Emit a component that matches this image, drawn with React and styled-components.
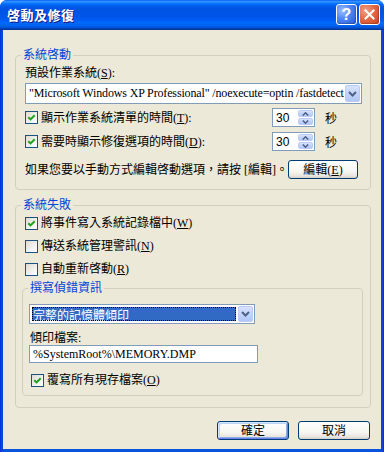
import React from 'react';
import styled, { createGlobalStyle } from 'styled-components';

const Global = createGlobalStyle`
  html, body { margin: 0; padding: 0; background: #ffffff; }
  body { font-family: "Liberation Serif", "Noto Sans CJK TC", serif; font-size: 12px; color: #000; }
  * { box-sizing: border-box; }
`;

const Window = styled.div`
  width: 384px;
  height: 452px;
  display: flex;
  flex-direction: column;
  background: linear-gradient(90deg, #0831D9 0%, #0855DD 1%, #0855DD 99%, #0831D9 100%);
  border-radius: 7px 7px 0 0;
  overflow: hidden;
`;

const TitleBar = styled.div`
  height: 30px;
  flex-shrink: 0;
  display: flex;
  align-items: center;
  padding: 0 4px 1px 7px;
  background: linear-gradient(180deg, #0058EE 0%, #3593FF 4%, #288EFF 7%, #127DFF 10%, #036FFC 13%,
    #0262EE 18%, #0057E5 25%, #0054E3 30%, #0055EB 56%, #005BF5 66%, #026AFE 76%,
    #0062EF 86%, #0052D6 92%, #0040AB 96%, #003092 100%);
`;

const Title = styled.div`
  flex: 1;
  color: #ffffff;
  font-family: "Noto Sans CJK TC", sans-serif;
  font-weight: bold;
  font-size: 13px;
  line-height: 16px;
  letter-spacing: 0.5px;
  text-shadow: 1px 1px 0 #0A1883;
`;

const CaptionButton = styled.div`
  width: 21px;
  height: 21px;
  margin-left: 2px;
  border: 1px solid #ffffff;
  border-radius: 3px;
  display: flex;
  align-items: center;
  justify-content: center;
  color: #ffffff;
  font-family: "Liberation Sans", sans-serif;
  font-weight: bold;
  font-size: 16px;
  background: ${p => p.$close
    ? 'radial-gradient(circle at 30% 30%, #F0A088 0%, #E36A45 45%, #C8431E 100%)'
    : 'radial-gradient(circle at 30% 30%, #9DBDFB 0%, #4F85F0 45%, #2158D8 100%)'};
  box-shadow: inset -1px -1px 1px rgba(0, 0, 0, 0.2);
`;

const Body = styled.div`
  flex: 1;
  margin: 0 3px 3px 3px;
  background: #ECE9D8;
  padding: 18px 10px 0 12px;
  display: flex;
  flex-direction: column;
`;

const Group = styled.fieldset`
  margin: ${p => p.$mt || 0}px 0 0 0;
  padding: 0;
  min-width: 0;
  border: 1px solid #D0D0BF;
  border-radius: 4px;
`;

const Legend = styled.legend`
  color: #0046D5;
  margin-left: 5px;
  padding: 0 2px;
  line-height: 14px;
  font-size: 12px;
`;

const Content = styled.div`
  padding: ${p => p.$pad};
  display: flex;
  flex-direction: column;
`;

const Text = styled.div`
  line-height: 14px;
  margin-top: ${p => p.$mt || 0}px;
  margin-left: ${p => p.$ml || 0}px;
  white-space: nowrap;
`;

const U = styled.span`
  text-decoration: underline;
`;

const Combo = styled.div`
  height: ${p => p.$h}px;
  width: ${p => (p.$w ? `${p.$w}px` : 'auto')};
  margin-top: ${p => p.$mt || 0}px;
  border: 1px solid #7F9DB9;
  background: #ffffff;
  display: flex;
  align-items: stretch;
  padding: 1px;
`;

const ComboText = styled.div`
  flex: 1;
  display: flex;
  align-items: center;
  padding-left: 2px;
  white-space: nowrap;
  overflow: hidden;
  letter-spacing: -0.15px;
`;

const Selected = styled.div`
  flex: 1;
  display: flex;
  align-items: center;
  margin: 1px 2px 1px 1px;
  padding-left: 1px;
  background: #316AC5;
  color: #ffffff;
  outline: 1px dotted #000;
  outline-offset: -1px;
  font-family: "Noto Sans CJK TC", sans-serif;
`;

const ArrowButton = styled.div`
  width: 15px;
  border-radius: 2px;
  border: 1px solid #BBCBF3;
  background: linear-gradient(180deg, #D7E3FC 0%, #C3D4FC 50%, #B2C7F6 100%);
  display: flex;
  align-items: center;
  justify-content: center;
`;

const SpinRow = styled.div`
  display: grid;
  grid-template-columns: 1fr 43px 47px;
  align-items: center;
  height: 19px;
  margin-top: ${p => p.$mt}px;
`;

const CheckLabel = styled.div`
  display: flex;
  align-items: center;
  gap: 3px;
  line-height: 14px;
  white-space: nowrap;
  height: ${p => p.$h || 19}px;
  margin-top: ${p => p.$mt || 0}px;
  margin-left: ${p => p.$ml || 0}px;
`;

const Box = styled.span`
  width: 13px;
  height: 13px;
  flex-shrink: 0;
  border: 1px solid #1C5180;
  background: linear-gradient(135deg, #DCDCD7 0%, #F2F2EE 60%, #FFFFFF 100%);
  display: flex;
  align-items: center;
  justify-content: center;
`;

const Spinner = styled.div`
  height: 19px;
  border: 1px solid #7F9DB9;
  background: #ffffff;
  display: flex;
  padding: 1px;
`;

const SpinValue = styled.div`
  flex: 1;
  display: flex;
  align-items: center;
  padding-left: 2px;
  font-family: "Liberation Sans", sans-serif;
`;

const SpinButtons = styled.div`
  width: 15px;
  display: flex;
  flex-direction: column;
  gap: 1px;
`;

const SpinHalf = styled.div`
  flex: 1;
  border-radius: 2px;
  border: 1px solid #BBCBF3;
  background: linear-gradient(180deg, #D7E3FC 0%, #C3D4FC 50%, #B2C7F6 100%);
  display: flex;
  align-items: center;
  justify-content: center;
`;

const Unit = styled.div`
  padding-left: 10px;
  font-family: "Noto Sans CJK TC", sans-serif;
  line-height: 14px;
`;

const EditRow = styled.div`
  display: flex;
  align-items: center;
  justify-content: space-between;
  margin-top: 9px;
`;

const Button = styled.div`
  width: 72px;
  height: 19px;
  margin-right: ${p => p.$mr || 0}px;
  border: 1px solid #003C74;
  border-radius: 3px;
  display: flex;
  align-items: center;
  justify-content: center;
  line-height: 14px;
  background: linear-gradient(180deg, #FFFFFF 0%, #F6F6F2 60%, #E9E7DF 85%, #D6D0C5 100%);
  box-shadow: ${p => (p.$default
    ? 'inset 1px 1px 0 #CEE7FF, inset -1px -1px 0 #6982EE, inset 2px 2px 0 #BCD4F6, inset -2px -2px 0 #89ADE4'
    : 'none')};
`;

const TextBox = styled.div`
  width: ${p => p.$w}px;
  height: 18px;
  border: 1px solid #7F9DB9;
  background: #ffffff;
  display: flex;
  align-items: center;
  padding-left: 3px;
  white-space: nowrap;
`;

const ButtonRow = styled.div`
  display: flex;
  justify-content: flex-end;
  gap: 9px;
  margin-top: 13px;
  padding-right: 1px;
`;

const Check = () => (
  <svg width="9" height="9" viewBox="0 0 9 9">
    <polyline points="1.3,4.2 3.5,6.4 7.7,2.2" fill="none" stroke="#21A121" strokeWidth="2" />
  </svg>
);

const Chevron = ({ up }) => (
  <svg width="9" height="6" viewBox="0 0 9 6">
    <path d={up ? 'M1 5 L4.5 1.5 L8 5' : 'M1 1 L4.5 4.5 L8 1'} fill="none" stroke="#4D6185" strokeWidth="2" />
  </svg>
);

const SmallChevron = ({ up }) => (
  <svg width="7" height="4" viewBox="0 0 7 4">
    <path d={up ? 'M0.8 3.5 L3.5 0.8 L6.2 3.5' : 'M0.8 0.5 L3.5 3.2 L6.2 0.5'} fill="none" stroke="#4D6185" strokeWidth="1.5" />
  </svg>
);

const CheckItem = ({ checked, children, ...rest }) => (
  <CheckLabel {...rest}>
    <Box>{checked ? <Check /> : null}</Box>
    <span>{children}</span>
  </CheckLabel>
);

const SpinBox = ({ value }) => (
  <Spinner>
    <SpinValue>{value}</SpinValue>
    <SpinButtons>
      <SpinHalf><SmallChevron up /></SpinHalf>
      <SpinHalf><SmallChevron /></SpinHalf>
    </SpinButtons>
  </Spinner>
);

export default function App() {
  return (
    <>
      <Global />
      <Window>
        <TitleBar>
          <Title>啓動及修復</Title>
          <CaptionButton>?</CaptionButton>
          <CaptionButton $close>
            <svg width="11" height="11" viewBox="0 0 11 11">
              <path d="M1.5 1.5 L9.5 9.5 M9.5 1.5 L1.5 9.5" stroke="#ffffff" strokeWidth="2" strokeLinecap="square" />
            </svg>
          </CaptionButton>
        </TitleBar>
        <Body>
          <Group>
            <Legend>系統啓動</Legend>
            <Content $pad="4px 8px 10px 9px">
              <Text>預設作業系統(<U>S</U>):</Text>
              <Combo $h={21} $mt={3}>
                <ComboText>"Microsoft Windows XP Professional" /noexecute=optin /fastdetect</ComboText>
                <ArrowButton><Chevron /></ArrowButton>
              </Combo>
              <SpinRow $mt={4}>
                <CheckItem checked>顯示作業系統清單的時間(<U>T</U>):</CheckItem>
                <SpinBox value="30" />
                <Unit>秒</Unit>
              </SpinRow>
              <SpinRow $mt={5}>
                <CheckItem checked>需要時顯示修復選項的時間(<U>D</U>):</CheckItem>
                <SpinBox value="30" />
                <Unit>秒</Unit>
              </SpinRow>
              <EditRow>
                <Text>如果您要以手動方式編輯啓動選項，請按 [編輯]。</Text>
                <Button $mr={4}>編輯(<U>E</U>)</Button>
              </EditRow>
            </Content>
          </Group>

          <Group $mt={8}>
            <Legend>系統失敗</Legend>
            <Content $pad="1px 7px 11px 6px">
              <CheckItem checked $h={20} $ml={3}>將事件寫入系統記錄檔中(<U>W</U>)</CheckItem>
              <CheckItem $h={20} $ml={3} $mt={3}>傳送系統管理警訊(<U>N</U>)</CheckItem>
              <CheckItem $h={20} $ml={3} $mt={3}>自動重新啓動(<U>R</U>)</CheckItem>
              <Group $mt={2}>
                <Legend>撰寫偵錯資訊</Legend>
                <Content $pad="9px 6px 5px 6px">
                  <Combo $h={20} $w={226}>
                    <Selected>完整的記憶體傾印</Selected>
                    <ArrowButton><Chevron /></ArrowButton>
                  </Combo>
                  <Text $mt={7} $ml={1}>傾印檔案:</Text>
                  <TextBox $w={229}>%SystemRoot%\MEMORY.DMP</TextBox>
                  <CheckItem checked $h={20} $ml={2} $mt={7}>覆寫所有現存檔案(<U>O</U>)</CheckItem>
                </Content>
              </Group>
            </Content>
          </Group>

          <ButtonRow>
            <Button $default>確定</Button>
            <Button>取消</Button>
          </ButtonRow>
        </Body>
      </Window>
    </>
  );
}
